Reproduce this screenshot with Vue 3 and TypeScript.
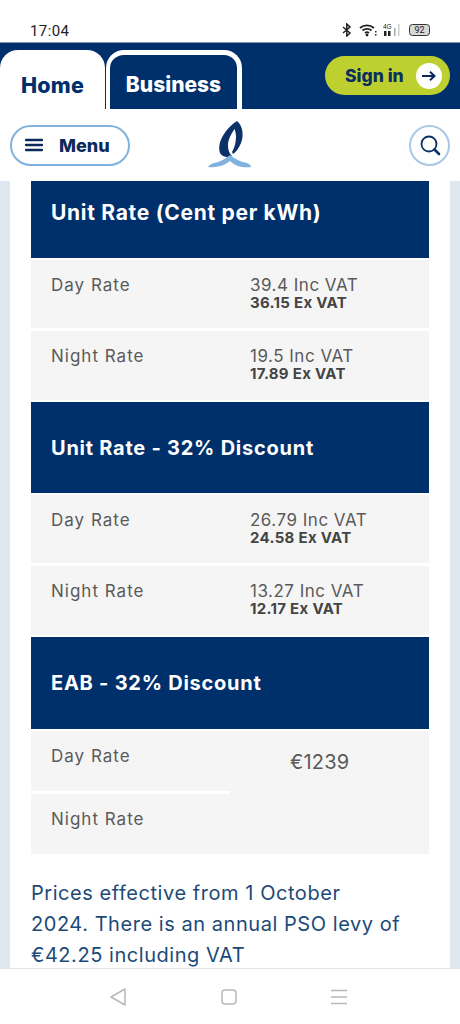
<script setup lang="ts">
interface Row { name: string; inc: string; ex: string }
interface Section { title: string; rows: Row[]; cls: string }
const sections: Section[] = [
  { title: 'Unit Rate (Cent per kWh)', cls: 'first', rows: [
    { name: 'Day Rate', inc: '39.4 Inc VAT', ex: '36.15 Ex VAT' },
    { name: 'Night Rate', inc: '19.5 Inc VAT', ex: '17.89 Ex VAT' },
  ] },
  { title: 'Unit Rate - 32% Discount', cls: '', rows: [
    { name: 'Day Rate', inc: '26.79 Inc VAT', ex: '24.58 Ex VAT' },
    { name: 'Night Rate', inc: '13.27 Inc VAT', ex: '12.17 Ex VAT' },
  ] },
]
</script>

<template>
  <div class="phone">
    <div class="status">
      <span class="time">17:04</span>
      <div class="status-icons">
        <svg width="12" height="14" viewBox="0 0 12 14" class="bt"><path d="M2 4l7 6-3.2 3V1L9 4l-7 6" fill="none" stroke="#222" stroke-width="1.5"/></svg>
        <svg width="18" height="14" viewBox="0 0 18 14"><g fill="none" stroke="#222" stroke-width="1.8"><path d="M1 5c4-3.600 10-3.600 14 0"/><path d="M3.500 7.500c2.500-2.200 6.500-2.200 9 0"/><path d="M6 10c1.200-1 2.800-1 4 0"/></g><circle cx="8" cy="12" r="1.400" fill="#222"/><rect x="16" y="8" width="1.500" height="1.500" fill="#222"/><rect x="16" y="11" width="1.500" height="1.500" fill="#222"/></svg>
        <svg width="19" height="14" viewBox="0 0 19 14"><text x="0" y="6" font-size="6.500" font-family="Liberation Sans, sans-serif" fill="#222">4G</text><rect x="1" y="8" width="2.500" height="5" fill="#222"/><rect x="5" y="8" width="2.500" height="5" fill="#222"/><rect x="11" y="5" width="1.500" height="8" fill="#aaa"/><rect x="15" y="1" width="1.500" height="12" fill="#ccc"/></svg>
        <div class="battery">92</div>
      </div>
    </div>

    <div class="topnav">
      <div class="tab tab-home">Home</div>
      <div class="tab tab-business">Business</div>
      <div class="signin">
        <span>Sign in</span>
        <span class="arrow">
          <svg width="14" height="12" viewBox="0 0 14 12"><path d="M0 6h12M8 1.800 12.500 6 8 10.200" fill="none" stroke="#0b2a5b" stroke-width="2"/></svg>
        </span>
      </div>
    </div>

    <div class="subnav">
      <div class="menu">
        <svg width="18" height="14" viewBox="0 0 18 14"><path d="M1 2h16M1 7h16M1 12h16" stroke="#0b2a5b" stroke-width="2.400" stroke-linecap="round"/></svg>
        <span>Menu</span>
      </div>
      <svg class="logo" width="44" height="50" viewBox="0 0 44 50">
        <path d="M29 1C35 6 36 16 33 23C31 28 28 32 25 34L24 32C26.500 28 28 22 28 17C28 13 27 10 26.500 9C23 14 20 20 20 25C20 30 21 33 24 36C20 38 14 37 12 33C10 27 12 20 16 14C20 8 24 4 29 1Z" fill="#0c3068"/>
        <path d="M0 47C1 45 3 44 6 43C12 42 17 39 22 35C27 39 33 42 39 43C41 44 43 45 43 47C36 48 28 47 22 41C16 46 8 48 0 47Z" fill="#7fb2de"/>
      </svg>
      <div class="search">
        <svg width="22" height="22" viewBox="0 0 22 22"><circle cx="10" cy="10" r="7.500" fill="none" stroke="#0c3068" stroke-width="1.800"/><path d="M15.500 15.500l4.500 4.500" stroke="#0c3068" stroke-width="2.600" stroke-linecap="round"/></svg>
      </div>
    </div>

    <main class="page">
      <div class="sheet">
        <div class="table">
          <template v-for="s in sections" :key="s.title">
            <h2 class="band" :class="s.cls">{{ s.title }}</h2>
            <div v-for="r in s.rows" :key="r.name" class="row">
              <div class="name">{{ r.name }}</div>
              <div class="value">
                <div class="inc">{{ r.inc }}</div>
                <div class="ex">{{ r.ex }}</div>
              </div>
            </div>
          </template>
          <h2 class="band last">EAB - 32% Discount</h2>
          <div class="eab">
            <div class="eab-names">
              <div class="eab-name day">Day Rate</div>
              <div class="eab-name">Night Rate</div>
            </div>
            <div class="eab-value">€1239</div>
          </div>
        </div>
        <p class="note">Prices effective from 1 October<br>2024. There is an annual PSO levy of<br>€42.25 including VAT</p>
      </div>
    </main>

    <div class="sysnav">
      <svg width="18" height="20" viewBox="0 0 18 20"><path d="M16 2v16L2 10z" fill="none" stroke="#b5b9bd" stroke-width="1.500" stroke-linejoin="round"/></svg>
      <svg width="16" height="16" viewBox="0 0 16 16"><rect x="1" y="1" width="14" height="14" rx="3" fill="none" stroke="#b5b9bd" stroke-width="1.500"/></svg>
      <svg width="16" height="16" viewBox="0 0 16 16"><path d="M0 1.500h16M0 8h16M0 14.500h16" stroke="#b5b9bd" stroke-width="1.300"/></svg>
    </div>
  </div>
</template>

<style>
html, body { margin: 0; padding: 0; background: #fff; }
</style>

<style scoped>
* { box-sizing: border-box; }
.phone {
  width: 460px;
  height: 1024px;
  overflow: hidden;
  display: flex;
  flex-direction: column;
  font-family: Inter, "Open Sans", "Liberation Sans", sans-serif;
  background: #fff;
}
.status {
  height: 43px;
  flex: none;
  display: flex;
  align-items: flex-end;
  justify-content: space-between;
  padding: 0 30px 2px 30px;
  border-bottom: 1px solid #7f9dbb;
}
.time { font-family: Roboto, sans-serif; font-size: 15px; color: #222; line-height: 18px; letter-spacing: .4px; }
.status-icons { display: flex; align-items: center; gap: 6px; height: 16px; margin-bottom: 2px; }
.battery {
  width: 21px; height: 12px; border: 1.300px solid #333; border-radius: 3.500px;
  background: #d8d8d8; font: 9px/10px Roboto, sans-serif; color: #222; text-align: center; margin-left: 1px;
}
.topnav {
  height: 66px;
  flex: none;
  background: #00306b;
  display: flex;
  align-items: flex-start;
  position: relative;
  padding-top: 7px;
}
.tab {
  height: 59px;
  font-weight: 800;
  font-size: 21px;
  display: flex;
  align-items: center;
  justify-content: center;
  padding-top: 10px;
}
.tab-home {
  width: 105px;
  background: #fff;
  color: #00306b;
  font-size: 21.500px;
  letter-spacing: .2px;
  border-radius: 18px 18px 0 0;
}
.tab-business {
  width: 136px;
  margin-left: 1px;
  background: #00306b;
  color: #fff;
  border: 5px solid #fff;
  border-bottom: 0;
  border-left-width: 4px;
  border-radius: 18px 18px 0 0;
  padding-top: 5px;
}
.signin {
  margin-left: auto;
  margin-right: 10px;
  margin-top: 6px;
  width: 125px;
  height: 39px;
  border-radius: 20px;
  background: #bdd02f;
  display: flex;
  align-items: center;
  justify-content: space-between;
  padding: 0 8px 0 20px;
  color: #0b2f5e;
  font-weight: 800;
  font-size: 17.500px;
}
.arrow {
  width: 26px; height: 26px; border-radius: 50%; background: #fff;
  display: flex; align-items: center; justify-content: center;
}
.subnav {
  height: 72px;
  flex: none;
  position: relative;
  display: flex;
  align-items: center;
  justify-content: space-between;
  padding: 0 10px;
  background: #fff;
}
.menu {
  width: 120px;
  height: 41px;
  border: 2.500px solid #7fb2de;
  border-radius: 21px;
  display: flex;
  align-items: center;
  padding-left: 13px;
  gap: 16px;
  font-weight: 800;
  font-size: 18px;
  color: #0b2a5b;
}
.logo { position: absolute; left: 208px; top: 11px; }
.search {
  width: 41px; height: 41px; border-radius: 50%;
  border: 2.500px solid #a9c8e6;
  display: flex; align-items: center; justify-content: center;
}
.page {
  flex: 1;
  min-height: 0;
  overflow: hidden;
  padding: 0 10px;
  background: #dfe8f0;
}
.sheet { background: #fff; height: 100%; padding: 0 21px; }
.table { display: flex; flex-direction: column; }
.band {
  margin: 2px 0;
  background: #00306b;
  color: #fff;
  font-size: 20px;
  font-weight: 700;
  height: 91px;
  display: flex;
  align-items: center;
  padding: 0 20px;
  letter-spacing: .75px;
  white-space: nowrap;
}
.band.first { height: 77px; margin-top: 0; padding-bottom: 15px; font-size: 21px; letter-spacing: .7px; }
.band.last { height: 92px; padding-bottom: 1px; }
.row {
  height: 68px;
  background: #f5f5f5;
  display: flex;
  padding: 15px 0 0 20px;
  color: #555;
}
.row + .row { margin-top: 3px; height: 69px; }
.name { width: 199px; font-size: 17px; line-height: 20px; color: #5a5a5a; letter-spacing: 1px; }
.inc { font-size: 17px; line-height: 20px; color: #5a5a5a; letter-spacing: .5px; }
.ex { font-size: 15px; line-height: 17px; font-weight: 700; color: #444; letter-spacing: .3px; margin-top: -1px; }
.eab {
  height: 123px;
  background: #f5f5f5;
  display: flex;
}
.eab-names { width: 199px; }
.eab-name { padding: 15px 0 0 20px; font-size: 17px; line-height: 20px; color: #5a5a5a; letter-spacing: 1px; height: 60px; }
.eab-name.day { border-bottom: 3px solid #fff; height: 63px; }
.eab-value { margin-left: 60px; padding-top: 19px; font-size: 20px; line-height: 24px; color: #5a5a5a; letter-spacing: .2px; }
.note {
  margin: 24px 0 0;
  font-size: 20px;
  line-height: 31px;
  color: #1c4a78;
  letter-spacing: .55px;
  white-space: nowrap;
}
.sysnav {
  height: 56px;
  flex: none;
  background: #fff;
  border-top: 1px solid #e4e4e4;
  display: flex;
  align-items: center;
  padding-left: 109px;
  gap: 94px;
}
</style>
